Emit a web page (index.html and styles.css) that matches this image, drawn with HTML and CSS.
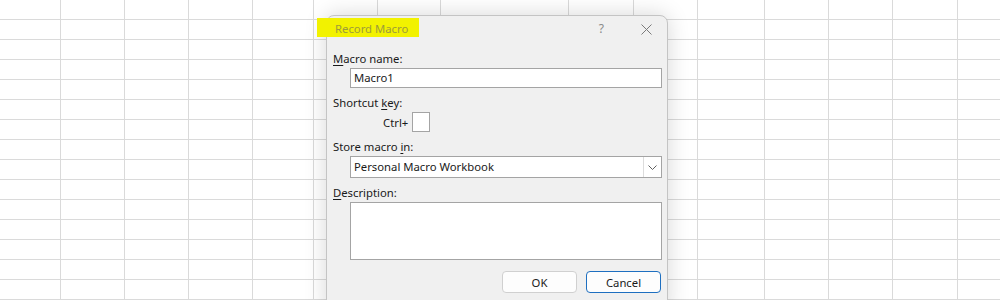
FILE: index.html
```html
<!DOCTYPE html>
<html lang="en">
<head>
  <meta charset="UTF-8" />
  <title>Record Macro</title>
  <link rel="stylesheet" href="styles.css">
</head>
<body>
  <div class="sheet">
    <div class="cols">
      <div class="col w61"></div>
      <div class="col w64"></div>
      <div class="col w64"></div>
      <div class="col w64"></div>
      <div class="col w61"></div>
      <div class="col w64"></div>
      <div class="col w63"></div>
      <div class="col w128"></div>
      <div class="col w65"></div>
      <div class="col w64"></div>
      <div class="col w67"></div>
      <div class="col w64"></div>
      <div class="col w64"></div>
      <div class="col w65"></div>
      <div class="col rest"></div>
    </div>

    <div class="dialog">
      <div class="titlebar">
        <span class="title">Record Macro</span>
        <span class="help">?</span>
        <svg class="close" width="11" height="11" viewBox="0 0 11 11">
          <path d="M0.5 0.5 L10.5 10.5 M10.5 0.5 L0.5 10.5" stroke="#7a7a7a" stroke-width="1" fill="none"/>
        </svg>
      </div>

      <div class="body">
        <div class="label"><u>M</u>acro name:</div>
        <div class="field">Macro1</div>

        <div class="label gap">Shortcut <u>k</u>ey:</div>
        <div class="ctrl-row">
          <span>Ctrl+</span>
          <span class="keybox"></span>
        </div>

        <div class="label gap">Store macro <u>i</u>n:</div>
        <div class="select">
          <span class="select-text">Personal Macro Workbook</span>
          <span class="select-btn">
            <svg width="9" height="5" viewBox="0 0 9 5">
              <path d="M0.5 0.5 L4.5 4.5 L8.5 0.5" stroke="#606060" stroke-width="1" fill="none"/>
            </svg>
          </span>
        </div>

        <div class="label gap"><u>D</u>escription:</div>
        <div class="textarea"></div>

        <div class="buttons">
          <button class="btn">OK</button>
          <button class="btn primary">Cancel</button>
        </div>
      </div>
    </div>
  </div>
</body>
</html>
```

FILE: styles.css
```css
* {
  box-sizing: border-box;
}
body {
  margin: 0;
  background: #fff;
  font-family: "Noto Sans", "Open Sans", sans-serif;
  font-size: 11.3px;
  color: #1a1a1a;
}
.sheet {
  position: relative;
  width: 1000px;
  height: 300px;
  overflow: hidden;
  background-image: repeating-linear-gradient(to bottom, transparent 0 19px, #dadada 19px 20px);
}
.cols {
  display: flex;
  height: 300px;
}
.col {
  border-right: 1px solid #dadada;
  flex: none;
}
.w61 { width: 61px; }
.w63 { width: 63px; }
.w64 { width: 64px; }
.w65 { width: 65px; }
.w67 { width: 67px; }
.w128 { width: 128px; }
.rest { flex: 1; border-right: none; }

.dialog {
  position: absolute;
  left: 326px;
  top: 15px;
  width: 342px;
  height: 300px;
  background: #f0f0f0;
  border: 1px solid #c4c4c4;
  border-radius: 8px 8px 0 0;
  box-shadow: 0 0 22px rgba(0, 0, 0, 0.16);
}
.titlebar {
  display: flex;
  align-items: flex-start;
  height: 35px;
  padding-top: 2px;
}
.title {
  display: inline-block;
  height: 19px;
  line-height: 21px;
  margin-left: -10px;
  padding: 0 11px 0 18px;
  background: #f2f200;
  color: #9d9c3a;
  font-size: 11.3px;
}
.help {
  margin-left: auto;
  margin-top: 3px;
  color: #8a8a8a;
  font-size: 12px;
  line-height: 16px;
}
.close {
  margin: 6px 15px 0 37px;
}
.body {
  padding: 0 5px 0 6px;
}
.label {
  height: 16px;
  line-height: 16px;
}
.label u {
  text-underline-offset: 2px;
}
.gap {
  margin-top: 7px;
}
.field {
  margin: 1px 0 0 17px;
  height: 20px;
  line-height: 18px;
  padding-left: 3px;
  background: #fff;
  border: 1px solid #a4a4a4;
}
.ctrl-row {
  display: flex;
  align-items: center;
  gap: 4px;
  margin: 1px 0 0 50px;
  height: 20px;
}
.keybox {
  width: 18px;
  height: 20px;
  background: #fff;
  border: 1px solid #a4a4a4;
}
.select {
  display: flex;
  margin: 1px 0 0 17px;
  height: 22px;
  background: #fff;
  border: 1px solid #a4a4a4;
}
.select-text {
  flex: 1;
  line-height: 20px;
  padding-left: 3px;
}
.select-btn {
  width: 18px;
  display: flex;
  align-items: center;
  justify-content: center;
  border-left: 1px solid #dcdcdc;
}
.textarea {
  margin: 1px 0 0 17px;
  height: 58px;
  background: #fff;
  border: 1px solid #a4a4a4;
}
.buttons {
  display: flex;
  justify-content: flex-end;
  gap: 9px;
  margin-top: 11px;
  padding-right: 1px;
}
.btn {
  width: 75px;
  height: 22px;
  font-family: inherit;
  font-size: 11.3px;
  color: #1a1a1a;
  background: #fdfdfd;
  border: 1px solid #d0d0d0;
  border-radius: 4px;
  padding: 0;
}
.primary {
  border-color: #1e6fc0;
}
```
